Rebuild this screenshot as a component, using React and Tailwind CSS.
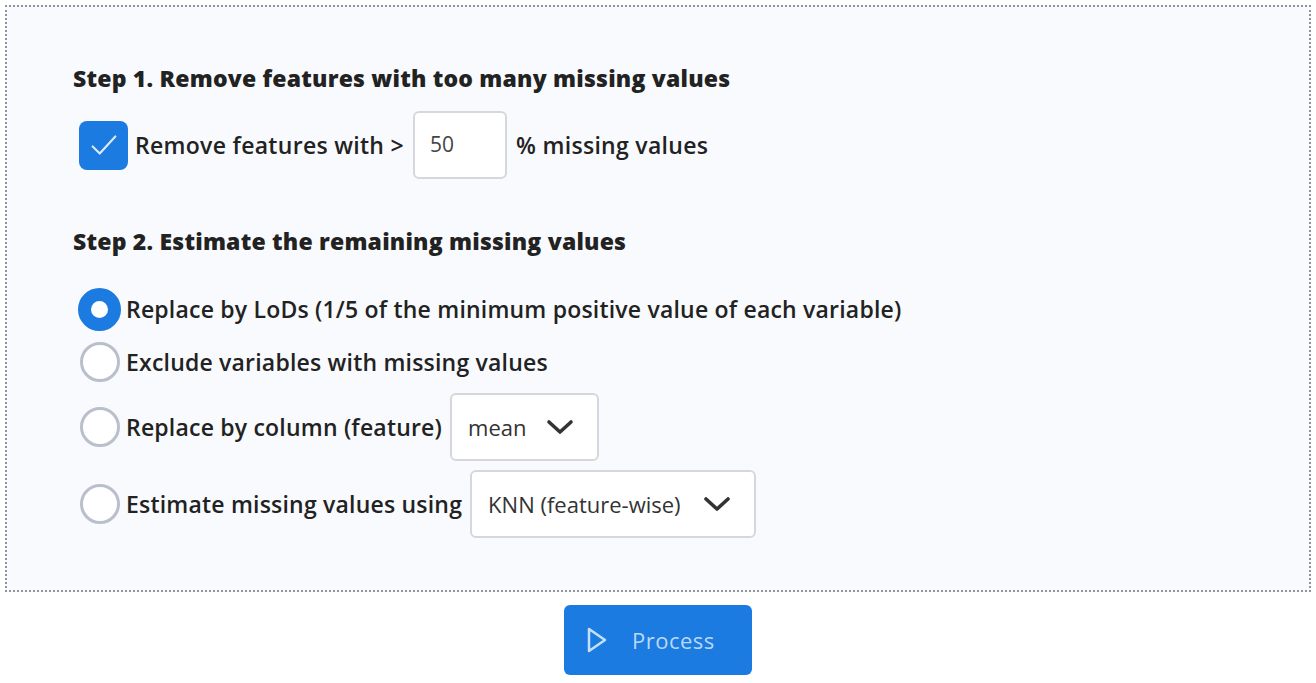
function Radio({ checked }) {
  return checked ? (
    <span className="w-[43px] h-[43px] rounded-full border-[13px] border-[#1b7be0] bg-white shrink-0" />
  ) : (
    <span className="w-[40px] h-[40px] ml-[2px] mr-[1px] rounded-full border-[3px] border-[#b9bfcc] bg-white shrink-0" />
  );
}

function Chevron() {
  return (
    <svg width="30" height="18" viewBox="0 0 30 18" fill="none" stroke="#333" strokeWidth="3.6" strokeLinecap="round" strokeLinejoin="round">
      <path d="M4 4l11 10L26 4" />
    </svg>
  );
}

function Select({ value, width }) {
  return (
    <div
      className={`${width} h-[68px] flex items-center justify-between pl-4 pr-[22px] bg-white border-2 border-[#d5d7dc] rounded-md text-[22px] text-[#333]`}
    >
      <span>{value}</span>
      <Chevron />
    </div>
  );
}

export default function App() {
  const options = [
    { label: "Replace by LoDs (1/5 of the minimum positive value of each variable)", checked: true },
    { label: "Exclude variables with missing values" },
    { label: "Replace by column (feature)", select: "mean", width: "w-[149px]" },
    { label: "Estimate missing values using", select: "KNN (feature-wise)", width: "w-[286px]" },
  ];

  return (
    <div className="w-full h-[683px] bg-white px-[5px] pt-[5px] font-['Open_Sans',sans-serif] text-[#222]">
      <div className="h-[587px] border-2 border-dotted border-[#8e949c] bg-[#f8fafd] pl-[66px] pt-[56px]">
        {/* Step 1 */}
        <h2 className="text-[23px] leading-[30px] font-extrabold tracking-[0.2px]">
          Step 1. Remove features with too many missing values
        </h2>
        <div className="mt-[18px] flex items-center h-[68px] text-[23px] font-semibold tracking-[0.3px]">
          <span className="ml-[6px] w-[49px] h-[49px] rounded-lg bg-[#1b7be0] flex items-center justify-center shrink-0">
            <svg width="34" height="34" viewBox="0 0 24 24" fill="none" stroke="#dbeafe" strokeWidth="1.5" strokeLinecap="round" strokeLinejoin="round">
              <path d="M4 13l5 5L20 6" />
            </svg>
          </span>
          <span className="ml-[7px]">Remove features with &gt;</span>
          <div className="ml-[9px] w-[94px] h-[68px] bg-white border-2 border-[#d5d7dc] rounded-md flex items-center pl-[15px] text-[21px] font-normal tracking-normal text-[#444]">
            50
          </div>
          <span className="ml-[9px]">% missing values</span>
        </div>

        {/* Step 2 */}
        <h2 className="mt-[47px] text-[23px] leading-[30px] font-extrabold tracking-[0.2px]">
          Step 2. Estimate the remaining missing values
        </h2>
        <div className="mt-[31px] flex flex-col gap-[9px] ml-[5px]">
          {options.map((o) => (
            <div key={o.label} className={`flex items-center ${o.select ? "h-[68px]" : "h-[44px]"}`}>
              <Radio checked={o.checked} />
              <span className="ml-[5px] text-[23px] font-semibold tracking-[0.2px] whitespace-nowrap">{o.label}</span>
              {o.select && (
                <div className="ml-[8px]">
                  <Select value={o.select} width={o.width} />
                </div>
              )}
            </div>
          ))}
        </div>
      </div>

      <div className="flex justify-center mt-[13px]">
        <button className="w-[188px] h-[70px] rounded-md bg-[#1b7be0] flex items-center pl-[22px] gap-[24px] text-[22px] text-[#b9d8f7]">
          <svg width="22" height="28" viewBox="0 0 22 28" fill="none" stroke="#c6e0fa" strokeWidth="2.5" strokeLinejoin="round">
            <path d="M3 3v22l16-11z" />
          </svg>
          <span className="tracking-[0.5px]">Process</span>
        </button>
      </div>
    </div>
  );
}
